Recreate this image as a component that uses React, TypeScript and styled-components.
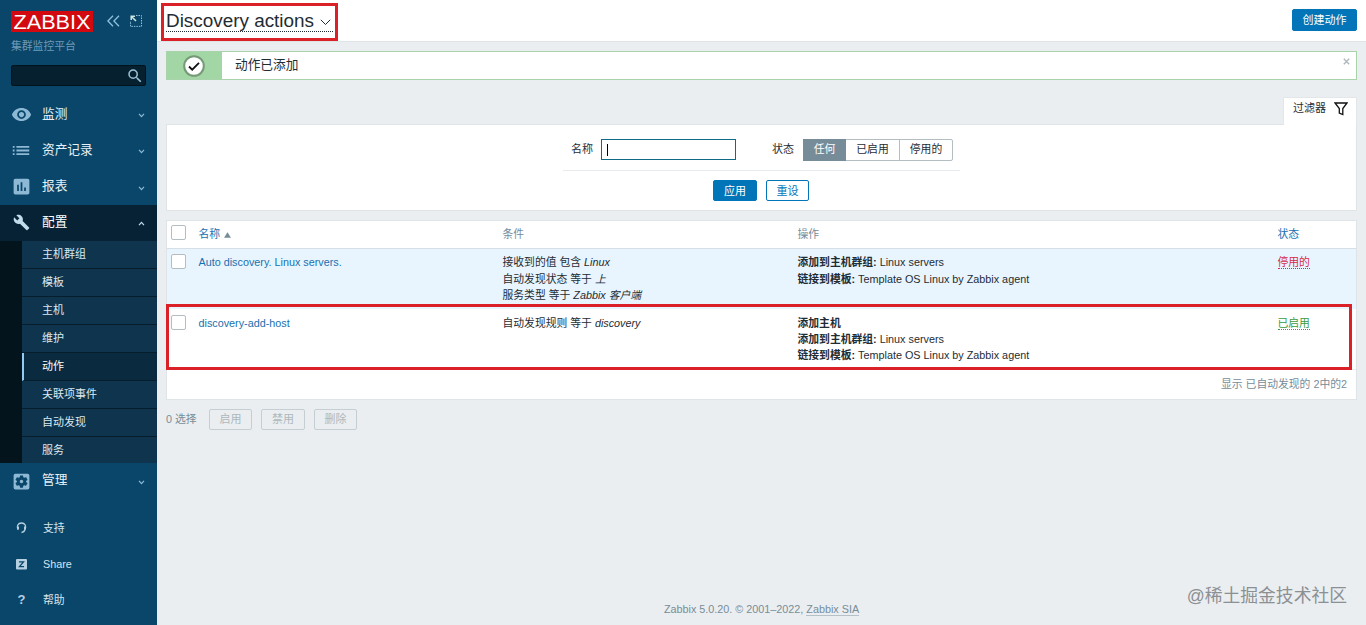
import React from "react";
import styled, { createGlobalStyle } from "styled-components";
import {
  MdAssessment,
  MdBuild,
  MdList,
  MdSearch,
  MdSettingsApplications,
  MdVisibility,
} from "react-icons/md";

const GlobalStyle = createGlobalStyle`
  * { box-sizing: border-box; }
  body {
    margin: 0;
    background: #ebeef0;
    color: #1f2c33;
    font: 10.8px/16.2px "Liberation Sans", "Noto Sans CJK SC", sans-serif;
    overflow: hidden;
  }
  button, input { font: inherit; }
`;

const Page = styled.div`
  display: flex;
  height: 625px;
`;

/* ---------- sidebar ---------- */

const Sidebar = styled.aside`
  flex: 0 0 157px;
  width: 157px;
  min-width: 0;
  display: flex;
  flex-direction: column;
  background: #0a466a;
`;

const Brand = styled.div`
  display: flex;
  align-items: center;
  height: 24px;
  margin: 9px 11px 0;
`;

const Logo = styled.div`
  display: flex;
  align-items: center;
  flex: none;
  width: 82px;
  height: 21px;
  background: #d20a10;
  margin-right: 14px;
`;

const BrandIcon = styled.svg`
  display: block;
  flex: none;
  margin-right: 10px;
  fill: none;
  stroke: #8fc0de;
  &:last-child { margin-right: 0; }
`;

const ServerName = styled.div`
  height: 26px;
  padding: 5px 0 0 11px;
  color: #6f9ab5;
`;

const Search = styled.div`
  display: flex;
  align-items: center;
  justify-content: flex-end;
  height: 21px;
  margin: 6px 11px 10px;
  padding-right: 1px;
  background: #06202f;
  border: 1px solid #03131d;
  border-radius: 2px;
  color: #9ac0d6;
`;

const MenuItem = styled.div<{ $open?: boolean }>`
  display: flex;
  align-items: center;
  flex: none;
  height: ${(p) => (p.$open ? 36 : 36.3)}px;
  padding: 0 12px 1px 10px;
  font-size: 12.7px;
  color: ${(p) => (p.$open ? "#fff" : "#e6f1f7")};
  background: ${(p) => (p.$open ? "#072235" : "transparent")};
`;

const MenuIcon = styled.span<{ $bright?: boolean }>`
  display: flex;
  justify-content: center;
  width: 22px;
  margin: 1px 10px 0 0;
  color: ${(p) => (p.$bright ? "#c3dcec" : "#8db9d5")};
`;

const MenuLabel = styled.span`
  flex: 1;
`;

const Chevron = styled.svg<{ $up?: boolean }>`
  width: 7px;
  height: 5px;
  margin-top: ${(p) => (p.$up ? 2 : 4)}px;
  fill: none;
  stroke: ${(p) => (p.$up ? "#c3dcec" : "#8db9d5")};
  stroke-width: 1.2;
  transform: ${(p) => (p.$up ? "rotate(180deg)" : "none")};
`;

const Submenu = styled.div`
  flex: none;
  height: 222px;
  padding-left: 22px;
  background: #04141d;
  overflow: hidden;
`;

const SubItem = styled.div<{ $active?: boolean }>`
  height: 28px;
  padding-left: ${(p) => (p.$active ? 18 : 20)}px;
  line-height: 27px;
  font-size: 11px;
  color: ${(p) => (p.$active ? "#fff" : "#dbe9f1")};
  background: ${(p) => (p.$active ? "#0a2b3f" : "#0f344d")};
  border-left: ${(p) => (p.$active ? "2px solid #8fcbf3" : "0")};
  border-bottom: 1px solid #061d2b;
`;

const SupportNav = styled.nav`
  margin-top: 11px;
`;

const SupportItem = styled.div`
  display: flex;
  align-items: center;
  height: 36px;
  padding-left: 15px;
  color: #d5e4ed;
`;

const SupportIcon = styled.span`
  display: flex;
  justify-content: center;
  width: 13px;
  margin-right: 15px;
  color: #b5d0e0;
  font-size: 13px;
  font-weight: 700;
`;

/* ---------- main column ---------- */

const Main = styled.main`
  flex: 1;
  display: flex;
  flex-direction: column;
  min-width: 0;
`;

const Header = styled.header`
  position: relative;
  display: flex;
  align-items: flex-start;
  justify-content: space-between;
  height: 42px;
  padding: 9px 9px 0;
  background: #fff;
  border-bottom: 1px solid #dfe4e7;
`;

const Title = styled.h1`
  display: flex;
  align-items: center;
  height: 23px;
  margin: 0;
  padding-top: 1px;
  border-bottom: 1px dotted #1f2c33;
  font-size: 18.9px;
  font-weight: 400;
  line-height: 22px;
  white-space: nowrap;
`;

const TitleChevron = styled.svg`
  margin: 3px 2px 0 6px;
  fill: none;
  stroke: #1f2c33;
`;

const Mark = styled.div<{ $x: number; $y: number; $w: number; $h: number }>`
  position: absolute;
  left: ${(p) => p.$x}px;
  top: ${(p) => p.$y}px;
  width: ${(p) => p.$w}px;
  height: ${(p) => p.$h}px;
  border: 3px solid #db2128;
  pointer-events: none;
`;

const Button = styled.button<{ $kind?: "solid" | "alt" | "off"; $w: number }>`
  width: ${(p) => p.$w}px;
  height: ${(p) => (p.$kind === "solid" && p.$w > 60 ? 22 : 21)}px;
  padding: 0;
  line-height: 19px;
  font-size: 11px;
  border-radius: 2px;
  border: 1px solid ${(p) => (p.$kind === "off" ? "#c5cfd3" : "#0275b8")};
  color: ${(p) =>
    p.$kind === "off" ? "#abb8bd" : p.$kind === "alt" ? "#0275b8" : "#fff"};
  background: ${(p) =>
    p.$kind === "off" ? "transparent" : p.$kind === "alt" ? "#fff" : "#0275b8"};
`;

const Content = styled.div`
  flex: 1;
  display: flex;
  flex-direction: column;
  padding: 9px 9px 0;
`;

const Message = styled.div`
  display: flex;
  height: 29px;
  background: #fff;
  border: 1px solid #a9d3ab;
`;

const MessageBadge = styled.div`
  display: flex;
  align-items: center;
  justify-content: center;
  width: 55px;
  padding-right: 2px;
  background: #a3d6a5;
`;

const MessageText = styled.div`
  flex: 1;
  padding-left: 13px;
  font-size: 12.7px;
  line-height: 26px;
`;

const CloseIcon = styled.svg`
  margin: 6px 6px 0 0;
  stroke: #b0b8bc;
  stroke-width: 1.4;
`;

const FilterTab = styled.div`
  display: flex;
  align-items: center;
  justify-content: space-between;
  align-self: flex-end;
  width: 74px;
  height: 28px;
  margin: 17px 0 -1px;
  padding: 0 8px 6px 9px;
  background: #fff;
  border: 1px solid #e3e7ea;
  border-bottom: 0;
  font-size: 11px;
  white-space: nowrap;
  z-index: 1;
`;

const FilterPanel = styled.section`
  height: 87px;
  padding: 14px 0 0;
  background: #fff;
  border: 1px solid #dfe4e7;
  display: flex;
  flex-direction: column;
  align-items: center;
`;

const FilterFields = styled.div`
  display: flex;
  align-items: flex-start;
  width: 397px;
  height: 32px;
  padding-left: 8px;
  border-bottom: 1px solid #e8ebed;
`;

const FieldLabel = styled.label<{ $w: number }>`
  width: ${(p) => p.$w}px;
  line-height: 20px;
  font-size: 11px;
`;

const NameField = styled.div`
  display: flex;
  align-items: center;
  width: 135px;
  height: 21px;
  margin-right: 36px;
  padding-left: 5px;
  background: #fff;
  border: 1px solid #0f6b85;
`;

const Caret = styled.span`
  width: 1px;
  height: 12px;
  background: #000;
`;

const Segments = styled.div`
  display: flex;
  width: 150px;
  height: 22px;
  border: 1px solid #b4bdc2;
  border-radius: 2px;
`;

const Segment = styled.div<{ $w: number; $on?: boolean }>`
  width: ${(p) => p.$w}px;
  margin: ${(p) => (p.$on ? "-1px 0 -1px -1px" : "0")};
  line-height: ${(p) => (p.$on ? 21 : 19)}px;
  text-align: center;
  color: ${(p) => (p.$on ? "#fff" : "#1f2c33")};
  background: ${(p) => (p.$on ? "#768d99" : "transparent")};
  & + &:last-child { border-left: 1px solid #b4bdc2; }
`;

const FilterActions = styled.div`
  display: flex;
  gap: 9px;
  margin-top: 9px;
  margin-right: 1px;
  ${Button} { padding-top: 1px; }
`;

const Table = styled.section`
  height: 180px;
  margin-top: 9px;
  background: #fff;
  border: 1px solid #dfe4e7;
`;

const Row = styled.div<{ $h: number; $tint?: boolean; $head?: boolean }>`
  position: relative;
  display: grid;
  grid-template-columns: 31.5px 304px 295px 480px 1fr;
  height: ${(p) => p.$h}px;
  padding-top: ${(p) => (p.$head ? 5 : p.$tint ? 5.4 : 6)}px;
  background: ${(p) => (p.$tint ? "#e8f5ff" : "#fff")};
  border-bottom: 1px solid
    ${(p) => (p.$head ? "#d5dfe5" : p.$tint ? "#e8f5ff" : "#e8edf0")};
  color: ${(p) => (p.$head ? "#768d99" : "#1f2c33")};
`;

const Checkbox = styled.span`
  width: 15px;
  height: 15px;
  margin: 0 0 0 4px;
  background: #fff;
  border: 1px solid #b4bdc2;
  border-radius: 2px;
  ${Row}:first-child & { margin-top: -1px; }
`;

const Link = styled.a`
  color: #1a70ae;
`;

const SortArrow = styled.svg`
  margin-left: 4px;
  fill: #768d99;
`;

const State = styled.span<{ $color: string }>`
  display: inline-block;
  height: 15px;
  color: ${(p) => p.$color};
  border-bottom: 1px dotted ${(p) => p.$color};
`;

const Strong = styled.b`
  font-weight: 700;
`;

const TableFooter = styled.div`
  padding: 6px 9px 0 0;
  text-align: right;
  color: #768d99;
`;

const BulkActions = styled.div`
  display: flex;
  align-items: center;
  gap: 9px;
  margin-top: 9px;
  color: #768d99;
`;

const SelectedCount = styled.span`
  width: 34px;
`;

const Footer = styled.footer`
  position: relative;
  margin-top: auto;
  height: 43px;
  padding: 19px 0 0;
  text-align: center;
  color: #768d99;
`;

const VendorLink = styled.span`
  display: inline-block;
  height: 15px;
  border-bottom: 1px solid #b5c0c7;
`;

const Watermark = styled.div`
  position: absolute;
  right: 10px;
  top: 1px;
  font: 17.8px/26px "Liberation Sans", "Noto Sans CJK SC", sans-serif;
  color: #8b9094;
`;

const SUBMENU = ["主机群组", "模板", "主机", "维护", "动作", "关联项事件", "自动发现", "服务"];

function MenuEntry(props: { icon: React.ReactNode; label: string; open?: boolean }) {
  return (
    <MenuItem $open={props.open}>
      <MenuIcon $bright={props.open}>{props.icon}</MenuIcon>
      <MenuLabel>{props.label}</MenuLabel>
      <Chevron $up={props.open} viewBox="0 0 7 5">
        <path d="M1 .8 3.5 3.6 6 .8" />
      </Chevron>
    </MenuItem>
  );
}

function SideNav() {
  return (
    <Sidebar>
      <Brand>
        <Logo>
          <svg width="82" height="21" viewBox="0 0 82 21">
            <text
              x="2.5"
              y="17.5"
              fill="#fff"
              fontFamily="Liberation Sans, sans-serif"
              fontSize="20.5"
              textLength="77"
              lengthAdjust="spacingAndGlyphs"
            >
              ZABBIX
            </text>
          </svg>
        </Logo>
        <BrandIcon width="13" height="12" viewBox="0 0 13 12" strokeWidth="1.3">
          <path d="M6 .8.9 6 6 11.200M12 .8 6.900 6 12 11.200" />
        </BrandIcon>
        <BrandIcon width="12" height="12" viewBox="0 0 12 12">
          <path d="M6 .5h5.500v10.900H.5V6" strokeDasharray="1.500 1" />
          <path d="M1.200 5V1.200H5M1.200 1.200 6 6" stroke="#cfe6e0" strokeWidth="1.500" />
        </BrandIcon>
      </Brand>
      <ServerName>集群监控平台</ServerName>
      <Search>
        <MdSearch size={18} />
      </Search>
      <MenuEntry icon={<MdVisibility size={21} />} label="监测" />
      <MenuEntry icon={<MdList size={23} />} label="资产记录" />
      <MenuEntry icon={<MdAssessment size={21} />} label="报表" />
      <MenuEntry icon={<MdBuild size={17} />} label="配置" open />
      <Submenu>
        {SUBMENU.map((name) => (
          <SubItem key={name} $active={name === "动作"}>
            {name}
          </SubItem>
        ))}
      </Submenu>
      <MenuEntry icon={<MdSettingsApplications size={21} />} label="管理" />
      <SupportNav>
        <SupportItem>
          <SupportIcon>
            <svg width="11" height="12" viewBox="0 0 11 12" fill="none" stroke="currentColor">
              <path d="M2 7.500C.3 4 2 1 5.500 1s5.200 3 3.500 6.500C8.400 9.300 7.500 10.300 5.500 10.500" strokeWidth="1.300" />
              <path d="M2 4.500v3M9 4.500v3" strokeWidth="2" />
            </svg>
          </SupportIcon>
          支持
        </SupportItem>
        <SupportItem>
          <SupportIcon>
            <svg width="11" height="11" viewBox="0 0 11 11">
              <rect width="11" height="10.500" rx="1" fill="currentColor" />
              <path d="M3 2.800h4.500L3.500 7.700H8" fill="none" stroke="#0a466a" strokeWidth="1.300" />
            </svg>
          </SupportIcon>
          Share
        </SupportItem>
        <SupportItem>
          <SupportIcon>?</SupportIcon>
          帮助
        </SupportItem>
      </SupportNav>
    </Sidebar>
  );
}

export default function App() {
  return (
    <Page>
      <GlobalStyle />
      <SideNav />
      <Main>
        <Header>
          <Title>
            Discovery actions
            <TitleChevron width="11" height="7" viewBox="0 0 11 7">
              <path d="M.8.8 5.500 5.500 10.200.8" />
            </TitleChevron>
          </Title>
          <Button $kind="solid" $w={65}>创建动作</Button>
          <Mark $x={4} $y={3} $w={177} $h={38} />
        </Header>
        <Content>
          <Message>
            <MessageBadge>
              <svg width="22" height="22" viewBox="0 0 22 22">
                <circle cx="11" cy="11" r="9.800" fill="#fff" stroke="#769a78" strokeWidth="2" />
                <path d="m6 11.500 3.200 3.200L16 7.800" fill="none" stroke="#111" strokeWidth="1.800" />
              </svg>
            </MessageBadge>
            <MessageText>动作已添加</MessageText>
            <CloseIcon width="7" height="7" viewBox="0 0 7 7">
              <path d="m.8.8 5.400 5.400M6.200.8.8 6.200" />
            </CloseIcon>
          </Message>
          <FilterTab>
            过滤器
            <svg width="14" height="14" viewBox="0 0 14 14" fill="none" stroke="#111" strokeWidth="1.300">
              <path d="M1 1h12L8.800 6.500V12.600L5.300 11V6.500Z" />
            </svg>
          </FilterTab>
          <FilterPanel>
            <FilterFields>
              <FieldLabel $w={30}>名称</FieldLabel>
              <NameField>
                <Caret />
              </NameField>
              <FieldLabel $w={31}>状态</FieldLabel>
              <Segments>
                <Segment $w={43} $on>任何</Segment>
                <Segment $w={53}>已启用</Segment>
                <Segment $w={53}>停用的</Segment>
              </Segments>
            </FilterFields>
            <FilterActions>
              <Button $kind="solid" $w={44}>应用</Button>
              <Button $kind="alt" $w={43}>重设</Button>
            </FilterActions>
          </FilterPanel>
          <Table>
            <Row $h={28} $head>
              <Checkbox />
              <span>
                <Link>名称</Link>
                <SortArrow width="7" height="6" viewBox="0 0 7 6">
                  <path d="M3.500.3 7 5.700H0Z" />
                </SortArrow>
              </span>
              <span>条件</span>
              <span>操作</span>
              <Link>状态</Link>
            </Row>
            <Row $h={60} $tint>
              <Checkbox />
              <Link>Auto discovery. Linux servers.</Link>
              <div>
                接收到的值 包含 <em>Linux</em>
                <br />
                自动发现状态 等于 <em>上</em>
                <br />
                服务类型 等于 <em>Zabbix 客户端</em>
              </div>
              <div>
                <Strong>添加到主机群组:</Strong> Linux servers
                <br />
                <Strong>链接到模板:</Strong> Template OS Linux by Zabbix agent
              </div>
              <div>
                <State $color="#d6294b">停用的</State>
              </div>
            </Row>
            <Row $h={61}>
              <Checkbox />
              <Link>discovery-add-host</Link>
              <div>
                自动发现规则 等于 <em>discovery</em>
              </div>
              <div>
                <Strong>添加主机</Strong>
                <br />
                <Strong>添加到主机群组:</Strong> Linux servers
                <br />
                <Strong>链接到模板:</Strong> Template OS Linux by Zabbix agent
              </div>
              <div>
                <State $color="#3a9a40">已启用</State>
              </div>
              <Mark $x={-1} $y={-5} $w={1186} $h={66} />
            </Row>
            <TableFooter>显示 已自动发现的 2中的2</TableFooter>
          </Table>
          <BulkActions>
            <SelectedCount>0 选择</SelectedCount>
            <Button $kind="off" $w={43}>启用</Button>
            <Button $kind="off" $w={44}>禁用</Button>
            <Button $kind="off" $w={43}>删除</Button>
          </BulkActions>
          <Footer>
            Zabbix 5.0.20. © 2001–2022, <VendorLink>Zabbix SIA</VendorLink>
            <Watermark>@稀土掘金技术社区</Watermark>
          </Footer>
        </Content>
      </Main>
    </Page>
  );
}
